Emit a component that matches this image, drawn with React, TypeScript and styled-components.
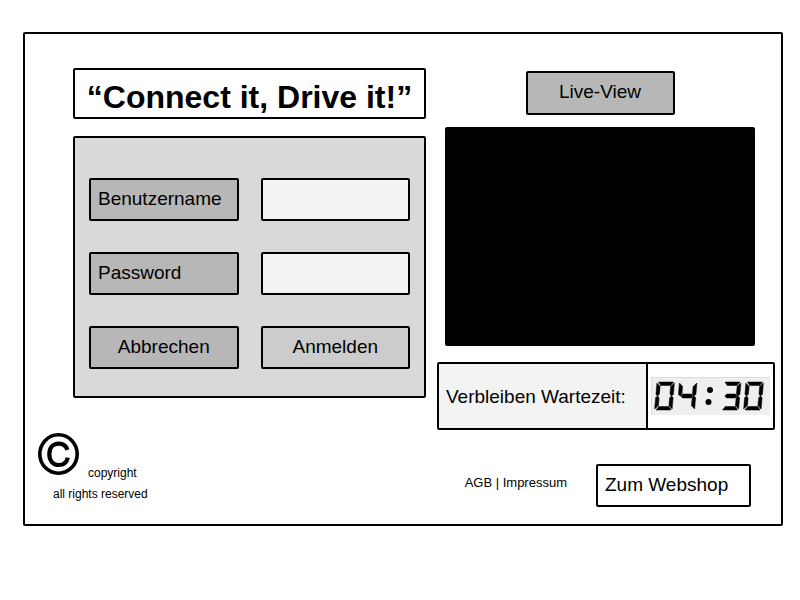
import React from "react";
import styled, { createGlobalStyle, css } from "styled-components";

const GlobalStyle = createGlobalStyle`
  *, *::before, *::after { box-sizing: border-box; }
  body {
    margin: 0;
    background: #fff;
    color: #000;
    font-family: "Liberation Sans", Arial, sans-serif;
    font-size: 19px;
  }
`;

const outlined = css`
  border: 2px solid #000;
  border-radius: 2px;
`;

const Page = styled.div`
  padding: 32px 17px 32px 23px;
`;

const Frame = styled.main`
  ${outlined}
  display: grid;
  grid-template-columns: 388fr 338fr;
  column-gap: 11px;
  padding: 34px 6px 17px 13px;
`;

const Column = styled.div`
  display: flex;
  flex-direction: column;
  min-width: 0;
`;

const Login = styled.section`
  display: flex;
  flex-direction: column;
  gap: 17px;
  margin-left: 35px;
`;

const Title = styled.h1`
  ${outlined}
  margin: 0;
  padding: 9px 0 2px;
  font-size: 32px;
  line-height: 36px;
  text-align: center;
`;

const LoginForm = styled.form`
  ${outlined}
  display: grid;
  grid-template-columns: 1fr 1fr;
  grid-auto-rows: 43px;
  gap: 31px 22px;
  padding: 40px 14px 27px;
  background: #d9d9d9;
`;

const FieldLabel = styled.label`
  ${outlined}
  display: flex;
  align-items: center;
  padding: 0 7px 2px;
  background: #b7b7b7;
`;

const FieldInput = styled.input`
  ${outlined}
  width: 100%;
  min-width: 0;
  margin: 0;
  padding: 0 7px 2px;
  background: #f3f3f3;
  font: inherit;
`;

const Button = styled.button<{ $tone: string }>`
  ${outlined}
  margin: 0;
  padding: 0 0 2px;
  background: ${(p) => p.$tone};
  color: inherit;
  font: inherit;
  cursor: pointer;
`;

const Legal = styled.footer`
  margin-top: 35px;
  font-size: 12px;
  line-height: 16px;
`;

const LegalMark = styled.div`
  display: flex;
  align-items: flex-end;
  gap: 9px;
  height: 48px;
  margin-bottom: 5px;

  svg { align-self: flex-start; }
`;

const LegalNote = styled.div`
  margin-left: 15px;
`;

const Live = styled.section`
  display: flex;
  flex-direction: column;
  align-items: center;
  gap: 12px;
  margin: 3px 20px 0 8px;
`;

const LiveButton = styled(Button)`
  width: 149px;
  height: 44px;
`;

const Screen = styled.div`
  width: 100%;
  height: 219px;
  border-radius: 2px;
  background: #000;
`;

const Timer = styled.section`
  ${outlined}
  display: grid;
  grid-template-columns: 209fr 125fr;
  height: 68px;
  margin-top: 16px;
`;

const TimerLabel = styled.div`
  display: flex;
  align-items: center;
  padding: 2px 0 0 7px;
  border-right: 2px solid #000;
  background: #f3f3f3;
  white-space: nowrap;
`;

const TimerValue = styled.div`
  display: flex;
  align-items: center;
  justify-content: center;
`;

const Links = styled.nav`
  display: flex;
  align-items: center;
  justify-content: flex-end;
  gap: 29px;
  margin: 34px 24px 0 0;
`;

const SmallLinks = styled.div`
  padding-bottom: 6px;
  font-size: 13px;
  line-height: 16px;
  white-space: nowrap;
`;

const TextLink = styled.a`
  color: inherit;
  text-decoration: none;
`;

const ShopLink = styled(TextLink)`
  ${outlined}
  display: flex;
  align-items: center;
  width: 155px;
  height: 43px;
  padding: 0 7px 2px;
  white-space: nowrap;
`;

const SEGMENTS: Record<string, string> = {
  a: "3,0 33,0 28,7 8,7",
  b: "35,2 35,25 31,28 28,24 28,9",
  c: "35,54 35,31 31,28 28,32 28,47",
  d: "3,56 33,56 28,49 8,49",
  e: "0,54 0,31 4,28 7,32 7,47",
  f: "0,2 0,25 4,28 7,24 7,9",
  g: "5,28 9,24 26,24 30,28 26,32 9,32",
};

const LIT: Record<string, string> = { "0": "abcdef", "3": "abcdg", "4": "bcfg" };

const Digit = ({ value, x }: { value: string; x: number }) => (
  <g transform={`translate(${x} 10) skewX(-5)`}>
    {LIT[value].split("").map((s) => (
      <polygon key={s} points={SEGMENTS[s]} />
    ))}
  </g>
);

const Clock = () => (
  <svg width="119" height="38" viewBox="0 0 238 76" role="img" aria-label="04:30">
    <rect width="238" height="76" fill="#efefef" />
    <path d="M1 76V1H238" fill="none" stroke="#dcdcdc" strokeWidth="2" />
    <g stroke="#000" strokeLinejoin="round">
      <Digit value="0" x={12} />
      <Digit value="4" x={57} />
      <Digit value="3" x={145} />
      <Digit value="0" x={190} />
    </g>
    <circle cx="118" cy="26" r="6" />
    <circle cx="115" cy="50" r="6" />
  </svg>
);

const CopyrightIcon = () => (
  <svg width="41" height="42" viewBox="0 0 41 42" fill="none" stroke="#000" aria-hidden="true">
    <ellipse cx="20.5" cy="21" rx="18.7" ry="19.2" strokeWidth="3.6" />
    <path
      d="M29.4 16.8C28.2 12.9 25.3 10.6 20.9 10.6C15 10.6 11.3 14.7 11.3 21.1C11.3 27.8 15 32 20.8 32C25.6 32 28.8 29.2 29.8 24.6"
      strokeWidth="4.2"
    />
  </svg>
);

export default function App() {
  return (
    <>
      <GlobalStyle />
      <Page>
        <Frame>
          <Column>
            <Login>
              <Title>“Connect it, Drive it!”</Title>
              <LoginForm onSubmit={(e) => e.preventDefault()}>
                <FieldLabel htmlFor="user">Benutzername</FieldLabel>
                <FieldInput id="user" type="text" autoComplete="username" />
                <FieldLabel htmlFor="pass">Password</FieldLabel>
                <FieldInput id="pass" type="password" autoComplete="current-password" />
                <Button type="reset" $tone="#b7b7b7">Abbrechen</Button>
                <Button type="submit" $tone="#cccccc">Anmelden</Button>
              </LoginForm>
            </Login>
            <Legal>
              <LegalMark>
                <CopyrightIcon />
                <span>copyright</span>
              </LegalMark>
              <LegalNote>all rights reserved</LegalNote>
            </Legal>
          </Column>
          <Column>
            <Live>
              <LiveButton type="button" $tone="#b7b7b7">Live-View</LiveButton>
              <Screen />
            </Live>
            <Timer>
              <TimerLabel>Verbleiben Wartezeit:</TimerLabel>
              <TimerValue>
                <Clock />
              </TimerValue>
            </Timer>
            <Links>
              <SmallLinks>
                <TextLink href="#agb">AGB</TextLink> | <TextLink href="#impressum">Impressum</TextLink>
              </SmallLinks>
              <ShopLink href="#webshop">Zum Webshop</ShopLink>
            </Links>
          </Column>
        </Frame>
      </Page>
    </>
  );
}
